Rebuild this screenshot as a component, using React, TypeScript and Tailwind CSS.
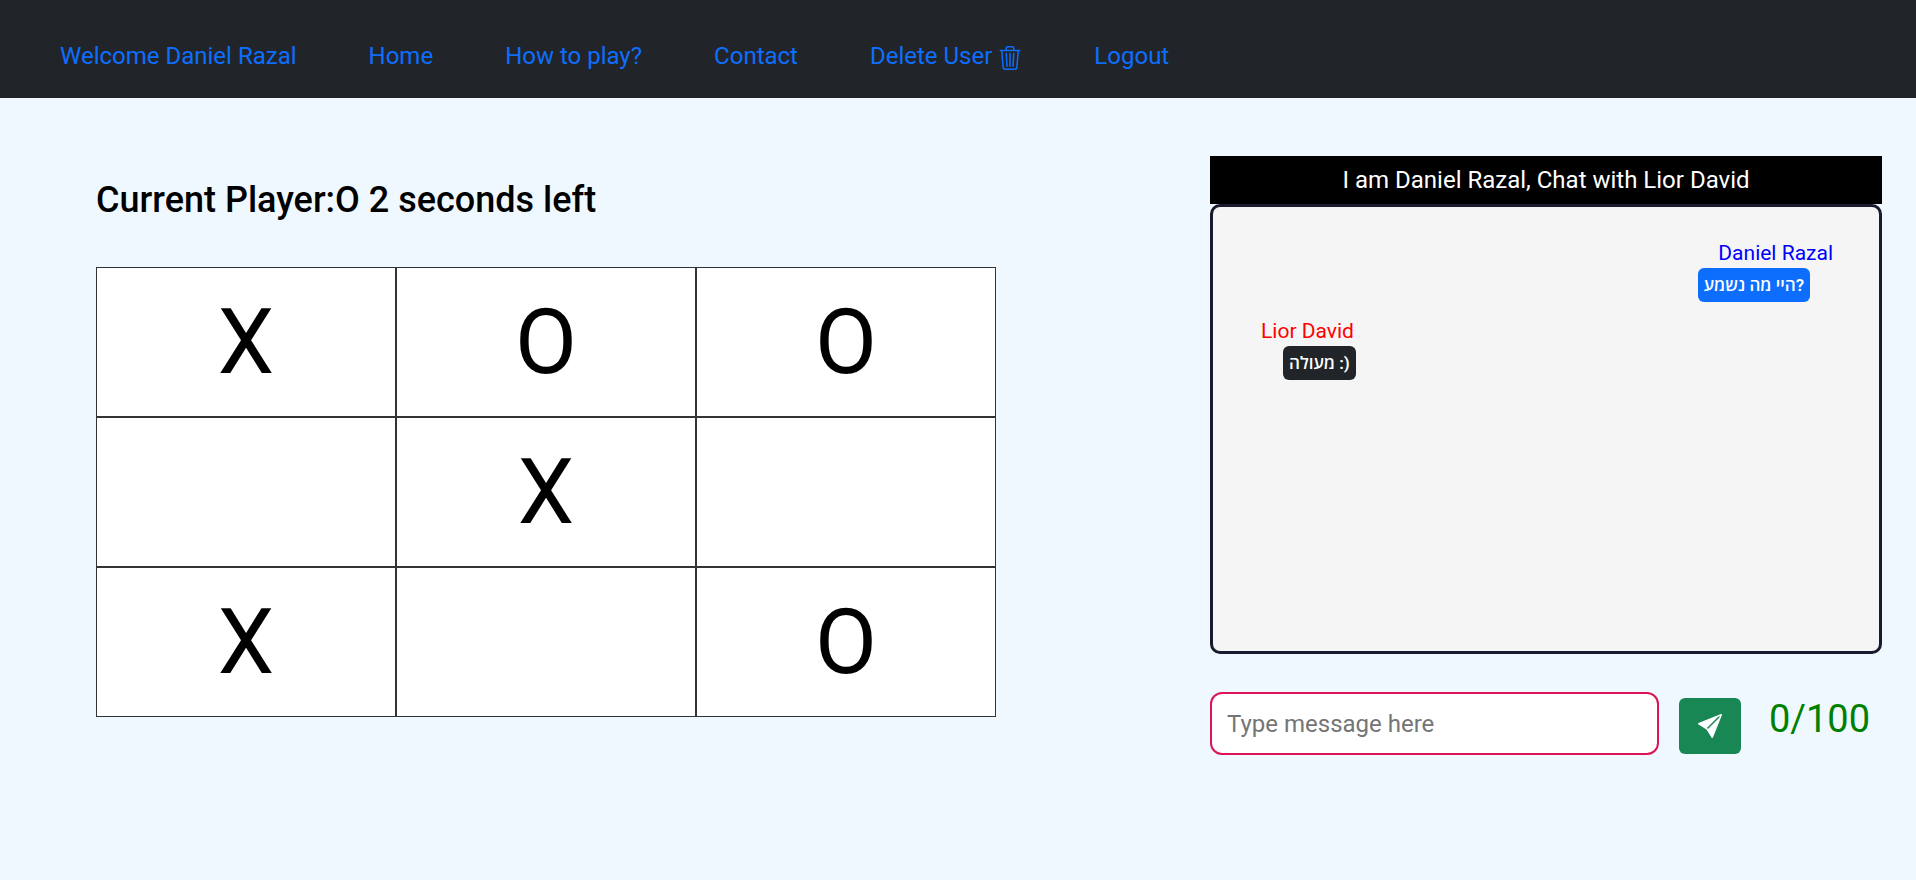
import { useState } from "react";
import { BsSendFill, BsTrash3 } from "react-icons/bs";

const links = ["Welcome Daniel Razal", "Home", "How to play?", "Contact", "Delete User", "Logout"];

const board = ["X", "O", "O", "", "X", "", "X", "", "O"];

function NavBar() {
  return (
    <nav className="bg-[#212529] px-[60px] pt-[38px] pb-6">
      <ul className="flex flex-wrap gap-x-[72px] text-2xl leading-9 text-[#0d6efd]">
        {links.map((label) => (
          <li key={label}>
            <a href="#" className="flex items-center gap-1.5">
              {label}
              {label === "Delete User" && <BsTrash3 className="mt-1" aria-hidden="true" />}
            </a>
          </li>
        ))}
      </ul>
    </nav>
  );
}

function Game() {
  return (
    <section className="pt-[22px]">
      <h1 className="text-4xl leading-11 font-medium">Current Player:O 2 seconds left</h1>
      <div className="mt-[45px] grid grid-cols-3">
        {board.map((mark, i) => (
          <button
            key={i}
            type="button"
            aria-label={`Cell ${i + 1} ${mark}`}
            className="flex h-[150px] items-center justify-center border border-[#333333] bg-white pt-0.5 text-[90px] leading-none"
          >
            {mark}
          </button>
        ))}
      </div>
    </section>
  );
}

function Chat() {
  const [message, setMessage] = useState("");
  return (
    <section>
      <h2 className="bg-black text-center text-2xl leading-[48px] text-white">
        I am Daniel Razal, Chat with Lior David
      </h2>
      <div className="h-[450px] overflow-y-auto rounded-[10px] border-[3px] border-[#1a1a2e] bg-[#f5f5f5] pt-[31px] pr-[46px] pl-12">
        <div className="flex flex-col items-end">
          <p className="text-[21px] leading-[30px] text-[#0000ff]">Daniel Razal</p>
          <p className="mr-[23px] rounded-md bg-[#0d6efd] px-[6px] text-[17px] leading-[34px] font-semibold text-white">
            היי מה נשמע?
          </p>
        </div>
        <div className="mt-3.5 flex flex-col items-start">
          <p className="text-[21px] leading-[30px] text-[#ff0000]">Lior David</p>
          <p className="ml-[22px] rounded-md bg-[#212529] px-[6px] text-[17px] leading-[34px] font-semibold text-white">
            מעולה :)
          </p>
        </div>
      </div>
      <form className="mt-[38px] flex items-end" onSubmit={(e) => e.preventDefault()}>
        <input
          type="text"
          aria-label="Message"
          maxLength={100}
          value={message}
          onChange={(e) => setMessage(e.target.value)}
          placeholder="Type message here"
          className="h-[63px] min-w-0 flex-1 rounded-xl border-2 border-[#dc1457] bg-white px-[15px] text-2xl placeholder:text-[#757575]"
        />
        <button
          type="submit"
          aria-label="Send"
          className="mb-px ml-5 flex h-14 w-[62px] items-center justify-center rounded-md bg-[#198754] text-2xl text-white"
        >
          <BsSendFill aria-hidden="true" />
        </button>
        <output className="mr-3 mb-3 ml-7 text-[38px] leading-[48px] text-[#008000]">{message.length}/100</output>
      </form>
    </section>
  );
}

export default function App() {
  return (
    <div className="min-h-screen bg-[#f0f8ff] font-[Roboto,'Open_Sans',sans-serif] text-black">
      <NavBar />
      <main className="grid grid-cols-[75fr_56fr] gap-[214px] pt-[58px] pr-[34px] pl-24">
        <Game />
        <Chat />
      </main>
    </div>
  );
}
